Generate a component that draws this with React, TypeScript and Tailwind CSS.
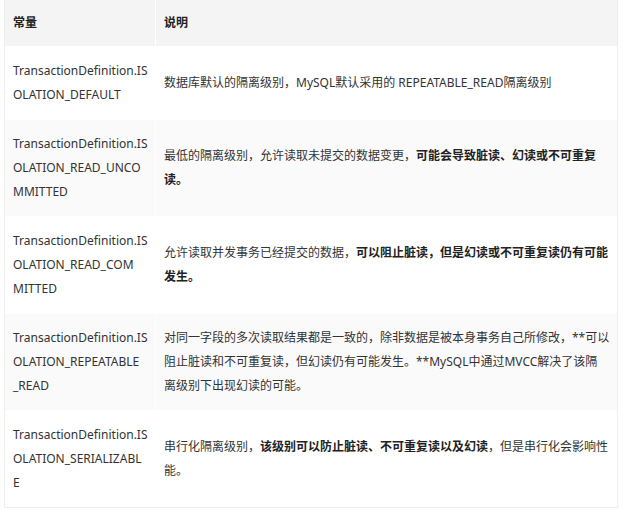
import React from 'react';

type Row = {
  name: string[];
  desc: React.ReactNode[];
};

const B = ({ children }: { children: React.ReactNode }) => (
  <strong className="font-bold text-[#222]">{children}</strong>
);

const rows: Row[] = [
  {
    name: ['TransactionDefinition.IS', 'OLATION_DEFAULT'],
    desc: ['数据库默认的隔离级别，MySQL默认采用的 REPEATABLE_READ隔离级别'],
  },
  {
    name: ['TransactionDefinition.IS', 'OLATION_READ_UNCO', 'MMITTED'],
    desc: [
      <>最低的隔离级别，允许读取未提交的数据变更，<B>可能会导致脏读、幻读或不可重复</B></>,
      <B>读。</B>,
    ],
  },
  {
    name: ['TransactionDefinition.IS', 'OLATION_READ_COM', 'MITTED'],
    desc: [
      <>允许读取并发事务已经提交的数据，<B>可以阻止脏读，但是幻读或不可重复读仍有可能</B></>,
      <B>发生。</B>,
    ],
  },
  {
    name: ['TransactionDefinition.IS', 'OLATION_REPEATABLE', '_READ'],
    desc: [
      '对同一字段的多次读取结果都是一致的，除非数据是被本身事务自己所修改，**可以',
      '阻止脏读和不可重复读，但幻读仍有可能发生。**MySQL中通过MVCC解决了该隔',
      '离级别下出现幻读的可能。',
    ],
  },
  {
    name: ['TransactionDefinition.IS', 'OLATION_SERIALIZABL', 'E'],
    desc: [
      <>串行化隔离级别，<B>该级别可以防止脏读、不可重复读以及幻读</B>，但是串行化会影响性</>,
      '能。',
    ],
  },
];

export default function App() {
  return (
    <div
      className="w-[623px] h-[510px] bg-white text-[#333] text-[12px] leading-[24px] overflow-hidden"
      style={{ fontFamily: '"Noto Sans", "Noto Sans CJK SC", sans-serif' }}
    >
      <div className="ml-[4px] w-[614px] border-l border-r border-b border-[#eeeeee]">
        {/* header */}
        <div className="grid grid-cols-[151px_1fr] bg-[#f4f4f4] h-[47px] border-b border-white">
          <div className="flex items-center pl-[8px] font-bold text-[#222] border-r border-white">常量</div>
          <div className="flex items-center pl-[8px] font-bold text-[#222]">说明</div>
        </div>

        {rows.map((row, i) => (
          <div
            key={i}
            className={`grid grid-cols-[151px_1fr] border-b border-white last:border-b-0 ${
              i % 2 === 1 ? 'bg-[#fafafa]' : 'bg-white'
            }`}
          >
            <div className="py-[12px] pl-[8px] border-r border-white flex flex-col justify-center">
              {row.name.map((l, j) => (
                <span key={j} className="block whitespace-nowrap">{l}</span>
              ))}
            </div>
            <div className="py-[12px] pl-[8px] pr-[8px] flex flex-col justify-center">
              {row.desc.map((l, j) => (
                <span key={j} className="block whitespace-nowrap">{l}</span>
              ))}
            </div>
          </div>
        ))}
      </div>
    </div>
  );
}
